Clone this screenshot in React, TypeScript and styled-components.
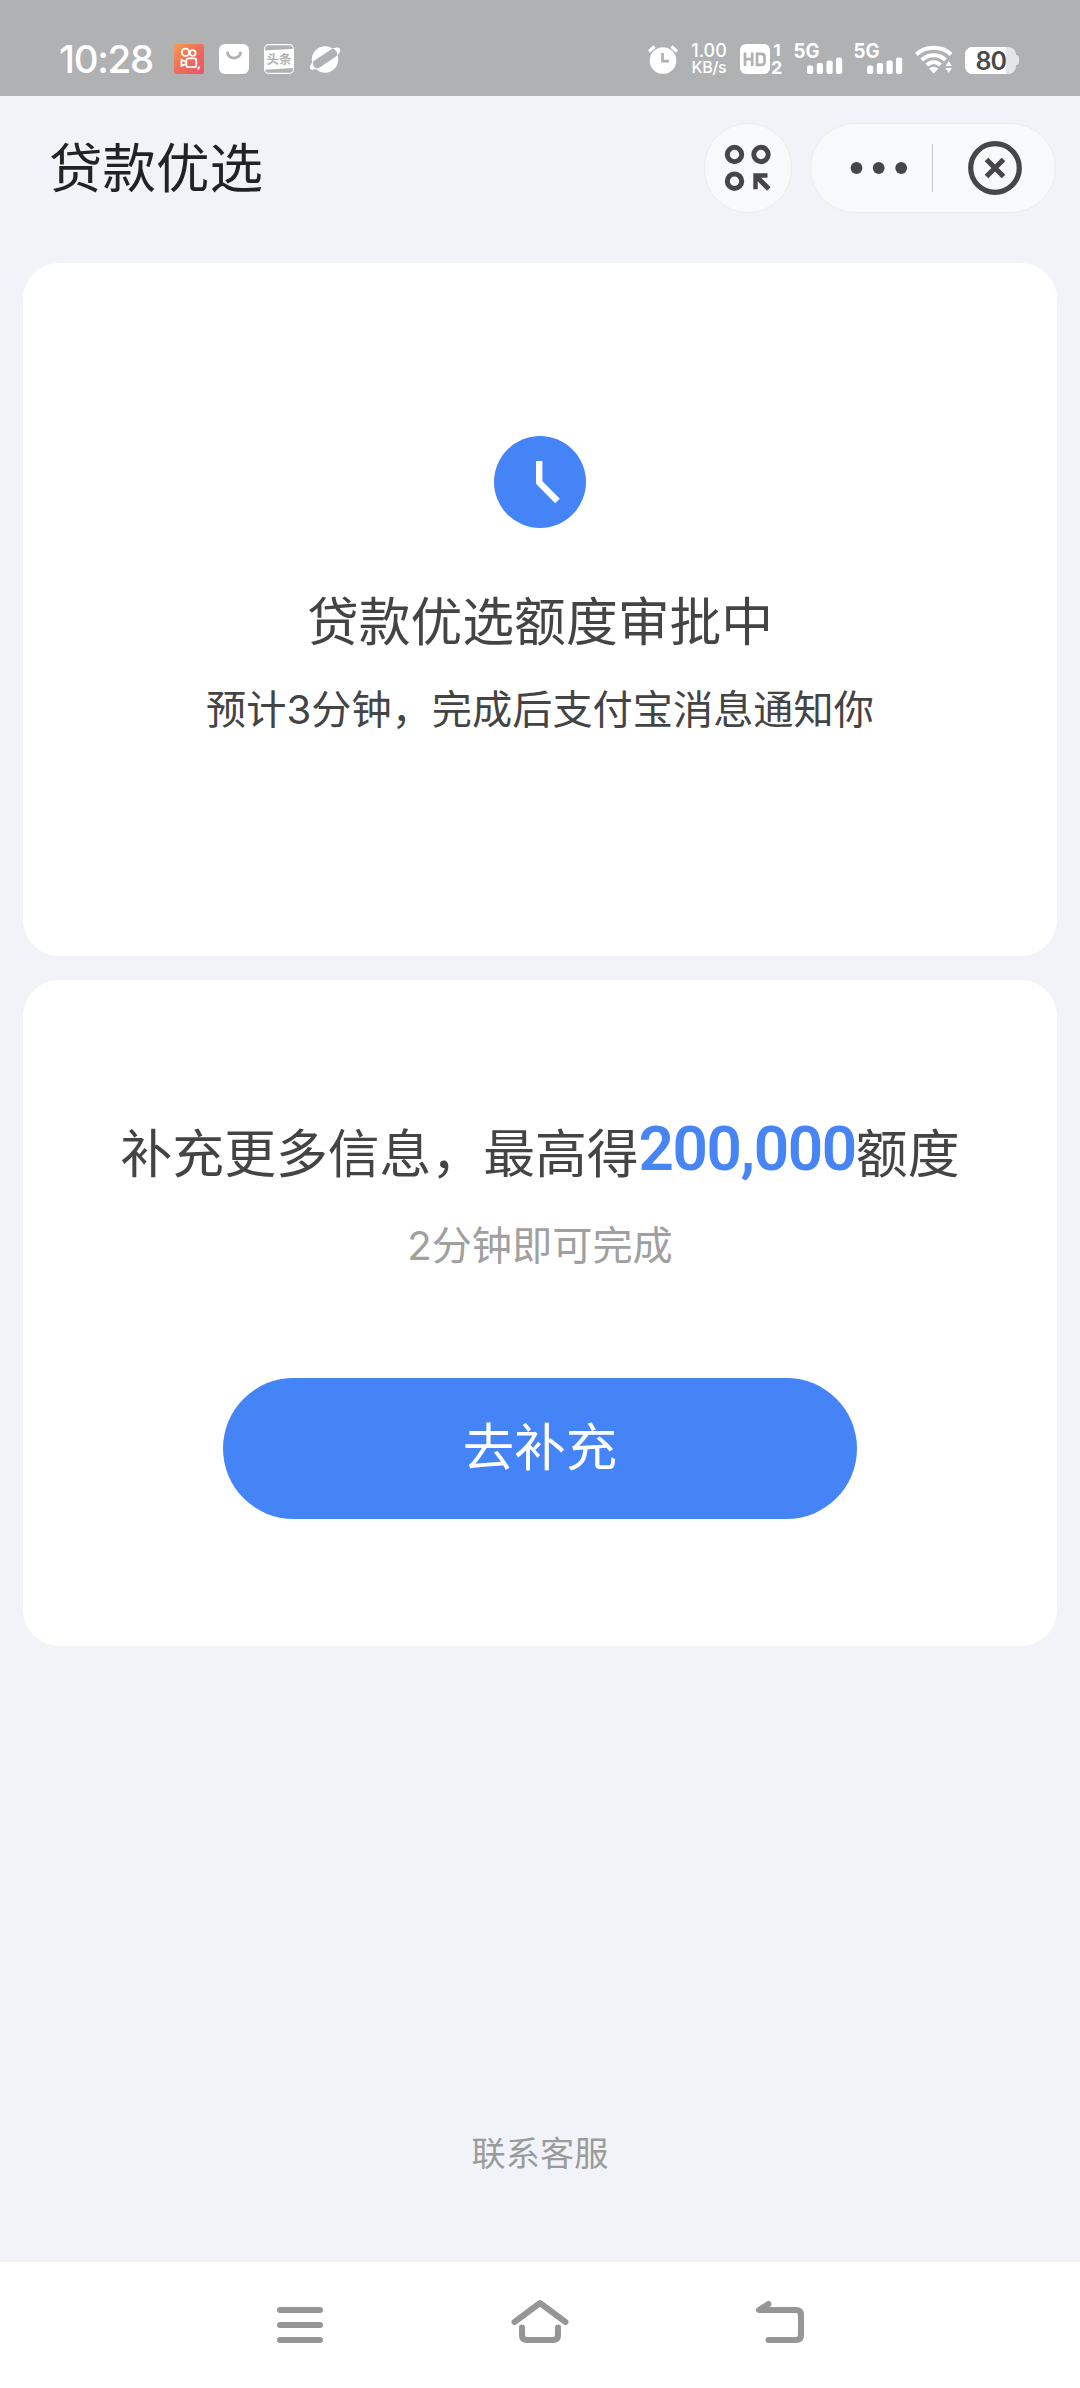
import React from "react";
import styled, { createGlobalStyle } from "styled-components";

const sans = `Inter, "Noto Sans CJK SC", "Noto Sans", sans-serif`;

const GlobalStyle = createGlobalStyle`
  * { box-sizing: border-box; }
  html, body { margin: 0; padding: 0; background: #f2f3f8; }
  body { font-family: ${sans}; }
`;

const Screen = styled.div`
  width: 1080px;
  height: 2388px;
  display: flex;
  flex-direction: column;
  background: #f2f3f8;
  overflow: hidden;
`;

const StatusBar = styled.header`
  height: 96px;
  flex: none;
  padding: 22px 61px 0 59px;
  display: flex;
  align-items: center;
  justify-content: space-between;
  background: #b0b1b3;
  color: #fff;
`;

const StatusGroup = styled.div<{ $gap: number }>`
  display: flex;
  align-items: center;
  gap: ${(p) => p.$gap}px;
`;

const Time = styled.span`
  width: 100px;
  font-size: 38.5px;
  line-height: 40px;
  letter-spacing: -1.3px;
  font-weight: 500;
  white-space: nowrap;
`;

const Speed = styled.div`
  width: 38px;
  display: flex;
  flex-direction: column;
  align-items: center;
  line-height: 17px;
  font-size: 18px;
  font-weight: 500;
  white-space: nowrap;
`;

const SpeedUnit = styled.span`
  font-size: 16px;
  letter-spacing: -0.3px;
`;

const Icon = styled.svg`
  display: block;
  flex: none;
  overflow: visible;
`;

const TitleBar = styled.div`
  height: 167px;
  flex: none;
  padding: 27px 24px 0 49px;
  display: flex;
  align-items: flex-start;
  justify-content: space-between;
`;

const Title = styled.h1`
  margin: 2px 0 0;
  font-size: 53.5px;
  line-height: 88px;
  font-weight: 400;
  color: #222325;
`;

const Controls = styled.div`
  display: flex;
  gap: 18px;
`;

const RoundButton = styled.button`
  width: 88px;
  height: 90px;
  padding: 0;
  display: flex;
  align-items: center;
  justify-content: center;
  border: 1px solid #ebecef;
  border-radius: 45px;
  background: #f8f9fb;
`;

const Capsule = styled.div`
  width: 246px;
  height: 90px;
  display: flex;
  align-items: center;
  border: 1px solid #ebecef;
  border-radius: 45px;
  background: #f8f9fb;
`;

const CapsuleHalf = styled.button<{ $width: number; $pad: number }>`
  width: ${(p) => p.$width}px;
  height: 100%;
  padding: 0 0 0 ${(p) => p.$pad}px;
  display: flex;
  align-items: center;
  border: 0;
  background: transparent;
`;

const Divider = styled.span`
  width: 1px;
  height: 48px;
  background: #c4c5c8;
`;

const Cards = styled.main`
  padding: 0 23px;
  display: flex;
  flex-direction: column;
  gap: 24px;
`;

const Card = styled.section<{ $height: number; $top: number }>`
  height: ${(p) => p.$height}px;
  padding-top: ${(p) => p.$top}px;
  display: flex;
  flex-direction: column;
  align-items: center;
  border-radius: 36px;
  background: #fff;
`;

const Headline = styled.h2<{ $top: number }>`
  margin: ${(p) => p.$top}px 0 0;
  font-size: 51.8px;
  line-height: 64px;
  font-weight: 400;
  color: #444;
  white-space: nowrap;
  display: flex;
`;

const Note = styled.p<{ $top: number; $muted?: boolean }>`
  margin: ${(p) => p.$top}px 0 0;
  font-size: 40.2px;
  line-height: 52px;
  color: ${(p) => (p.$muted ? "#a0a0a0" : "#444")};
  white-space: nowrap;
`;

const Amount = styled.strong`
  font-family: Roboto, sans-serif;
  font-size: 62px;
  line-height: 54px;
  font-weight: 600;
  letter-spacing: -1.4px;
  color: #4685f3;
`;

const PrimaryButton = styled.button`
  width: 634px;
  height: 141px;
  margin-top: 106px;
  padding: 0 0 3px;
  border: 0;
  border-radius: 71px;
  background: #4584f7;
  color: #fff;
  font-family: ${sans};
  font-size: 51.5px;
  line-height: 64px;
`;

const Footer = styled.footer`
  flex: 1;
  padding-bottom: 84px;
  display: flex;
  align-items: flex-end;
  justify-content: center;
`;

const ServiceLink = styled.a`
  font-size: 34.2px;
  line-height: 48px;
  color: #9b9b9b;
`;

const NavBar = styled.nav`
  height: 126px;
  flex: none;
  display: flex;
  align-items: center;
  justify-content: center;
  gap: 180px;
  background: #fff;
`;

const KuaishouIcon = () => (
  <Icon width="30" height="30" viewBox="0 0 30 30">
    <defs>
      <linearGradient id="warm" x1="0" y1="0" x2="1" y2="1">
        <stop offset="0" stopColor="#f5a04c" />
        <stop offset="0.45" stopColor="#f0705a" />
        <stop offset="1" stopColor="#e9536a" />
      </linearGradient>
    </defs>
    <rect width="30" height="30" rx="2.5" fill="url(#warm)" />
    <g fill="none" stroke="#fff" strokeWidth="1.8">
      <circle cx="11.5" cy="8.3" r="3.7" />
      <circle cx="18.7" cy="9" r="2.9" />
      <rect x="12.3" y="14.4" width="10" height="8.8" rx="2.3" />
      <path d="M12 18l-4.5-2.2v6L12 20" />
      <path d="M24.8 22.5v1.5l-1 1.4" />
    </g>
  </Icon>
);

const BagIcon = () => (
  <Icon width="30" height="30" viewBox="0 0 30 30">
    <rect width="30" height="30" rx="6" fill="#fff" />
    <path d="M8.5 8.8c1 7 12 7 13 0" fill="none" stroke="#b0b1b3" strokeWidth="2.8" strokeLinecap="round" />
  </Icon>
);

const NewsIcon = () => (
  <Icon width="30" height="30" viewBox="0 0 30 30">
    <rect x="0.6" y="0.6" width="28.8" height="28.8" rx="4" fill="none" stroke="#fff" strokeWidth="1.1" />
    <path d="M0 6.5L30 4.8V24L0 25.7z" fill="#fff" />
    <text x="15" y="19.8" textAnchor="middle" fontFamily="Noto Sans CJK SC" fontWeight="700" fontSize="12.5" fill="#b0b1b3">头条</text>
  </Icon>
);

const PlanetIcon = () => (
  <Icon width="32" height="30" viewBox="0 0 32 30">
    <circle cx="16" cy="15.5" r="13.2" fill="#fff" />
    <g transform="rotate(-34 16 14.7)">
      <ellipse cx="16" cy="14.7" rx="18" ry="5.6" fill="#fff" />
      <rect x="2.6" y="10.4" width="26.8" height="8.6" rx="3.6" fill="#b0b1b3" />
    </g>
  </Icon>
);

const AlarmIcon = () => (
  <Icon width="30" height="30" viewBox="0 0 30 30">
    <circle cx="15" cy="16.5" r="13.3" fill="#fff" />
    <path d="M1 7.5L6.5 2.5M29 7.5L23.5 2.5" stroke="#fff" strokeWidth="3.2" />
    <path d="M14.500 9v8.200H21" fill="none" stroke="#b0b1b3" strokeWidth="2.700" />
  </Icon>
);

const HdIcon = () => (
  <Icon width="43" height="30" viewBox="0 0 43 30">
    <rect width="30" height="30" rx="6" fill="#fff" />
    <path d="M5 8.500v13.500M12.200 8.500v13.500M5 15.200h7.200M17 9.800v11h4.500q3 0 3-3v-5q0-3-3-3z" fill="none" stroke="#b0b1b3" strokeWidth="2.700" />
    <text x="33.500" y="12" fontFamily="Inter" fontWeight="700" fontSize="16.500" fill="#fff">1</text>
    <text x="31" y="29.500" fontFamily="Inter" fontWeight="700" fontSize="18" fill="#fff">2</text>
  </Icon>
);

const SignalIcon = () => (
  <Icon width="48" height="30" viewBox="0 0 48 30">
    <text x="-1.500" y="14" fontFamily="Inter" fontWeight="700" fontSize="19.500" textLength="26" lengthAdjust="spacingAndGlyphs" fill="#fff">5G</text>
    <g fill="#fff">
      <rect x="12" y="21.500" width="6.200" height="8.500" rx="2" />
      <rect x="21.800" y="19" width="6.200" height="11" rx="2" />
      <rect x="31.500" y="16.500" width="6.200" height="13.500" rx="2" />
      <rect x="41" y="13.500" width="6.200" height="16.500" rx="2" />
    </g>
  </Icon>
);

const WifiIcon = () => (
  <Icon width="38" height="30" viewBox="0 0 38 30">
    <g fill="none" stroke="#fff" strokeWidth="4">
      <path d="M1.300 10.500C10.500 1.500 27 1.500 36 10.500" />
      <path d="M6.800 16C13.500 9.500 24 9.500 30.500 16" />
      <path d="M11.800 21C16 17.200 21.500 17.200 25.500 21" />
    </g>
    <path d="M14 24.500q4.700-3.500 9.400 0L18.700 29.500z" fill="#fff" />
    <path d="M30.500 22l3.200-5 3.200 5zM30.500 24h6.400l-3.200 5z" fill="#fff" />
  </Icon>
);

const BatteryIcon = () => (
  <Icon width="54" height="30" viewBox="0 0 54 30">
    <rect x="46" y="11" width="8" height="10" rx="3" fill="#e4e5e7" />
    <rect y="3" width="51" height="27" rx="7.500" fill="#e4e5e7" />
    <path d="M7.500 3H41V30H7.500A7.500 7.500 0 0 1 0 22.500V10.500A7.500 7.500 0 0 1 7.500 3z" fill="#fff" />
    <text x="25.700" y="25.800" textAnchor="middle" fontFamily="Inter" fontWeight="600" fontSize="25" letterSpacing="-1" fill="#4a4a4c">80</text>
  </Icon>
);

const AppsIcon = () => (
  <Icon width="46" height="46" viewBox="0 0 46 46">
    <g fill="none" stroke="#464648" strokeWidth="5">
      <circle cx="9.500" cy="9.500" r="7.200" />
      <circle cx="36" cy="9.500" r="7.200" />
      <circle cx="9.500" cy="36.200" r="7.200" />
      <path d="M30.500 44.200V30.500H42.500" strokeWidth="4.400" />
      <path d="M30.500 30.500L43.800 44" />
    </g>
  </Icon>
);

const MoreIcon = () => (
  <Icon width="58" height="14" viewBox="0 0 58 14" fill="#464648">
    <circle cx="6.500" cy="7" r="5.900" />
    <circle cx="28.700" cy="7" r="5.900" />
    <circle cx="51.200" cy="7" r="5.900" />
  </Icon>
);

const CloseIcon = () => (
  <Icon width="54" height="54" viewBox="0 0 54 54" fill="none" stroke="#464648" strokeWidth="5.200">
    <circle cx="27" cy="27" r="24.300" />
    <path d="M18.500 18.500L35.500 35.500M35.500 18.500L18.500 35.500" />
  </Icon>
);

const ClockIcon = () => (
  <Icon width="92" height="92" viewBox="0 0 92 92">
    <circle cx="46" cy="46" r="46" fill="#4584f7" />
    <path d="M45.200 25V46.500L63.500 65" fill="none" stroke="#fff" strokeWidth="6.400" strokeLinejoin="round" />
  </Icon>
);

const NavIcon = ({ children }: { children: React.ReactNode }) => (
  <Icon width="60" height="60" viewBox="0 0 60 60" fill="none" stroke="#969696" strokeWidth="6" strokeLinecap="round" strokeLinejoin="round">
    {children}
  </Icon>
);

export default function App() {
  return (
    <Screen>
      <GlobalStyle />
      <StatusBar>
        <StatusGroup $gap={15}>
          <Time>10:28</Time>
          <KuaishouIcon />
          <BagIcon />
          <NewsIcon />
          <PlanetIcon />
        </StatusGroup>
        <StatusGroup $gap={12}>
          <AlarmIcon />
          <Speed>
            <span>1.00</span>
            <SpeedUnit>KB/s</SpeedUnit>
          </Speed>
          <HdIcon />
          <SignalIcon />
          <SignalIcon />
          <WifiIcon />
          <BatteryIcon />
        </StatusGroup>
      </StatusBar>

      <TitleBar>
        <Title>贷款优选</Title>
        <Controls>
          <RoundButton aria-label="apps">
            <AppsIcon />
          </RoundButton>
          <Capsule>
            <CapsuleHalf $width={121} $pad={39} aria-label="more">
              <MoreIcon />
            </CapsuleHalf>
            <Divider />
            <CapsuleHalf $width={122} $pad={35} aria-label="close">
              <CloseIcon />
            </CapsuleHalf>
          </Capsule>
        </Controls>
      </TitleBar>

      <Cards>
        <Card $height={693} $top={173}>
          <ClockIcon />
          <Headline $top={62}>贷款优选额度审批中</Headline>
          <Note $top={30}>预计3分钟，完成后支付宝消息通知你</Note>
        </Card>
        <Card $height={666} $top={0}>
          <Headline $top={142}>
            <span>补充更多信息，最高得</span>
            <Amount>200,000</Amount>
            <span>额度</span>
          </Headline>
          <Note $top={34} $muted>
            2分钟即可完成
          </Note>
          <PrimaryButton>去补充</PrimaryButton>
        </Card>
      </Cards>

      <Footer>
        <ServiceLink>联系客服</ServiceLink>
      </Footer>

      <NavBar>
        <NavIcon>
          <path d="M10 15H50M10 30H50M10 45H50" />
        </NavIcon>
        <NavIcon>
          <path d="M4.5 27L30 8L55.500 27" />
          <path d="M12 32.500V40Q12 45 17 45H43Q48 45 48 40V32.500" />
        </NavIcon>
        <NavIcon>
          <path d="M18.500 9L9 15H46Q51 15 51 20V40Q51 45 46 45H18.500" />
        </NavIcon>
      </NavBar>
    </Screen>
  );
}
